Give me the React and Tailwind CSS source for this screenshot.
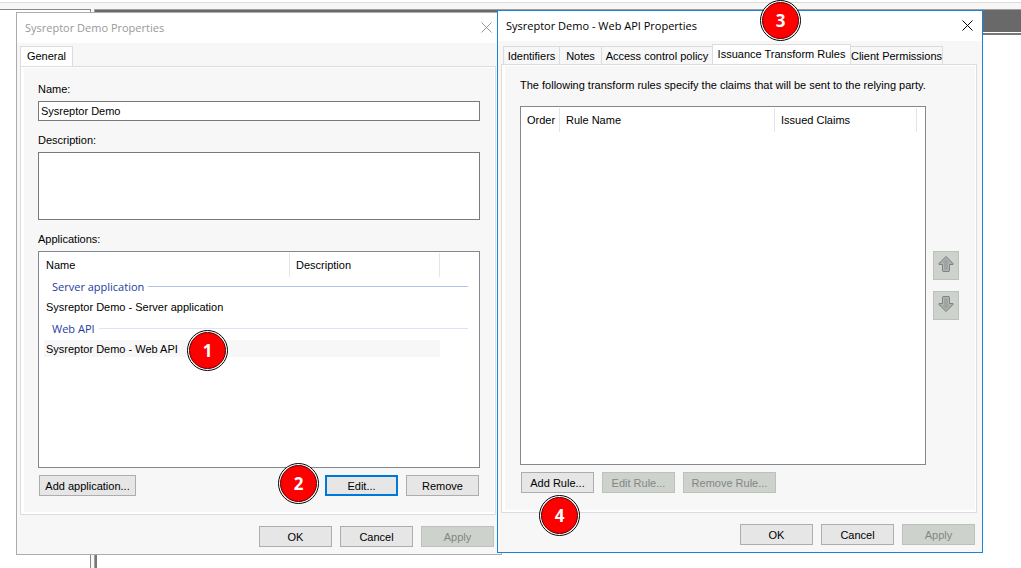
import React from "react";

function CloseIcon() {
  return (
    <svg width="11" height="11" viewBox="0 0 11 11" fill="none" stroke="currentColor" strokeWidth="1" aria-hidden="true">
      <path d="M0.5 0.5 10.5 10.5M10.5 0.5 0.5 10.5" />
    </svg>
  );
}

function ArrowIcon({ down }) {
  return (
    <svg width="16" height="16" viewBox="0 0 16 16" className={`-mt-1 ${down ? "rotate-180" : ""}`} aria-hidden="true">
      <path d="M8 0.5 15 7.5V8.5H11.5V15L11 15.5H5L4.5 15V8.5H1V7.5Z" fill="#a0a3a1" stroke="#7f8280" strokeWidth="1" strokeLinejoin="round" />
      <path d="M8 2 13 7.2H10.5V14.5H5.5V7.2H3Z" fill="none" stroke="#b9bdba" strokeWidth="0.8" />
    </svg>
  );
}

function Button({ children, className = "w-[73px]", primary, disabled }) {
  const look = disabled
    ? "border border-[#bcc1bc] bg-[#cdd2cd] text-[#858585]"
    : primary
      ? "border-2 border-[#0078d7] bg-[#e6e6e6]"
      : "border border-[#adadad] bg-[#e6e6e6]";
  return (
    <button type="button" disabled={disabled} className={`flex h-[21px] items-center justify-center whitespace-nowrap ${look} ${className}`}>
      {children}
    </button>
  );
}

function Tab({ children, active, className }) {
  return (
    <button
      type="button"
      role="tab"
      aria-selected={!!active}
      className={`flex items-center justify-center whitespace-nowrap border-[#dcdcdc] ${
        active ? "-mb-px h-[21px] border-x border-t bg-white pb-0.5" : "h-[18px] border-t border-r bg-[#f7f7f7]"
      } ${className}`}
    >
      {children}
    </button>
  );
}

function Dialog({ title, active, place, tabs, children }) {
  return (
    <section
      aria-label={title}
      className={`absolute flex w-[486px] flex-col border bg-[#f7f7f7] ${active ? "border-[#1883d7]" : "border-[#acacac]"} ${place}`}
    >
      <header className={`flex h-[30px] items-center justify-between bg-white pr-[9px] pl-2 font-['Open_Sans',sans-serif] text-[11px] ${active ? "text-black" : "text-[#999999]"}`}>
        <h2>{title}</h2>
        <button type="button" aria-label="Close" className="mb-0.5 flex size-[11px] items-center justify-center">
          <CloseIcon />
        </button>
      </header>
      <div className="flex flex-col pt-[3px] pr-[5px] pl-[3px]">
        <div role="tablist" className="flex h-5 items-end">{tabs}</div>
        <div className="border border-[#dcdcdc] bg-white pt-px pr-px pb-0.5 pl-[3px]">
          <div className="h-[444px] bg-[#f7f7f7]">{children}</div>
        </div>
      </div>
      <footer className="flex justify-end gap-2 pt-[11px] pr-[7px] pb-[7px]">
        <Button>OK</Button>
        <Button>Cancel</Button>
        <Button disabled>Apply</Button>
      </footer>
    </section>
  );
}

function GroupRow({ name, line }) {
  return (
    <tr className="h-[21px]">
      <th colSpan={3} scope="rowgroup" className="p-0 align-top font-normal">
        <div className="flex h-[19px] items-center gap-1 pr-[11px] pl-[13px] font-['Open_Sans',sans-serif] text-[11px] text-[#1e3c9e]">
          <span>{name}</span>
          <span className={`h-px flex-1 ${line}`} />
        </div>
      </th>
    </tr>
  );
}

function ItemRow({ name, selected }) {
  const fill = selected ? "bg-[#f7f7f7]" : "";
  return (
    <tr className="h-[21px]">
      <td className="p-0 pl-[5px] align-top">
        <div className={`flex h-[17px] items-center pl-0.5 ${fill}`}>{name}</div>
      </td>
      <td className="p-0 align-top">
        <div className={`h-[17px] ${fill}`} />
      </td>
      <td className="p-0" />
    </tr>
  );
}

function Badge({ n, place }) {
  return (
    <div className={`absolute flex size-[41px] items-center justify-center rounded-full border border-black bg-white p-px ${place}`}>
      <span className="flex size-full items-center justify-center rounded-full border border-[#5a0000] bg-[#fe0000] font-['Open_Sans',sans-serif] text-[17px] font-bold text-white">
        {n}
      </span>
    </div>
  );
}

const headCell = "h-6 border-r border-[#e5e5e5] p-0 pl-1.5 font-normal";

export default function App() {
  return (
    <main className="relative flex h-screen flex-col overflow-hidden bg-white font-['Liberation_Sans',Arial,sans-serif] text-[11px] leading-4 text-black">
      <div className="mt-0.5 h-[7px] border-t border-[#dcdcdc] bg-[#f7f7f7]" />
      <div className="flex flex-1 gap-[3px] bg-[#f7f7f7]">
        <div className="w-[91px] border-t border-r border-[#828790] bg-white" />
        <div className="flex flex-1 flex-col border-t border-l border-[#a0a0a0] bg-white">
          <div className="h-[22px] border-l-2 border-[#696969] bg-[#696969]" />
          <div className="mt-px flex-1 border-t-2 border-l-2 border-[#777777]" />
        </div>
      </div>

      <Dialog title="Sysreptor Demo Properties" place="top-3 left-4" tabs={<Tab active className="w-[53px]">General</Tab>}>
        <div className="flex flex-col px-3.5 pt-[13px]">
          <label htmlFor="name" className="mb-1">Name:</label>
          <input id="name" defaultValue="Sysreptor Demo" className="h-5 border border-[#7a7a7a] bg-white px-0.5 outline-none" />
          <label htmlFor="description" className="mt-[11px] mb-1">Description:</label>
          <textarea id="description" className="h-[68px] resize-none border border-[#7a7a7a] bg-white outline-none" />
          <div className="mt-[11px] mb-1">Applications:</div>
          <div className="h-[217px] border border-[#828790] bg-white pt-px">
            <table aria-label="Applications" className="w-full table-fixed border-separate border-spacing-0 text-left">
              <colgroup>
                <col className="w-[251px]" />
                <col className="w-[150px]" />
                <col />
              </colgroup>
              <thead>
                <tr>
                  <th className="h-6 border-r border-[#e5e5e5] p-0 pl-[7px] font-normal">Name</th>
                  <th className={headCell}>Description</th>
                  <th className="p-0" />
                </tr>
              </thead>
              <tbody>
                <GroupRow name="Server application" line="bg-[#b4c3e6]" />
                <ItemRow name="Sysreptor Demo - Server application" />
                <GroupRow name="Web API" line="bg-[#dce4f3]" />
                <ItemRow name="Sysreptor Demo - Web API" selected />
              </tbody>
            </table>
          </div>
          <div className="mt-[7px] flex gap-2 px-px">
            <Button className="mr-auto w-[97px]">Add application...</Button>
            <Button primary>Edit...</Button>
            <Button>Remove</Button>
          </div>
        </div>
      </Dialog>

      <Dialog
        title="Sysreptor Demo - Web API Properties"
        active
        place="top-2.5 left-[497px]"
        tabs={
          <>
            <Tab className="ml-0.5 w-[57px] border-l">Identifiers</Tab>
            <Tab className="w-[42px]">Notes</Tab>
            <Tab className="w-[110px] border-r-0">Access control policy</Tab>
            <Tab active className="w-[139px]">Issuance Transform Rules</Tab>
            <Tab className="w-[92px]">Client Permissions</Tab>
          </>
        }
      >
        <div className="flex flex-col pt-[11px] pl-[15px]">
          <p className="mb-[13px]">The following transform rules specify the claims that will be sent to the relying party.</p>
          <div className="flex gap-[7px]">
            <div className="h-[359px] w-[406px] border border-[#828790] bg-white pt-px">
              <table aria-label="Issuance transform rules" className="w-full table-fixed border-separate border-spacing-0 text-left">
                <colgroup>
                  <col className="w-[39px]" />
                  <col className="w-[215px]" />
                  <col className="w-[142px]" />
                  <col />
                </colgroup>
                <thead>
                  <tr>
                    <th className={headCell}>Order</th>
                    <th className={headCell}>Rule Name</th>
                    <th className={headCell}>Issued Claims</th>
                    <th className="p-0" />
                  </tr>
                </thead>
              </table>
            </div>
            <div className="flex flex-col justify-center gap-[11px]">
              <button type="button" disabled aria-label="Move up" className="flex h-[29px] w-[26px] items-center justify-center border border-[#bcc1bc] bg-[#cdd2cd]">
                <ArrowIcon />
              </button>
              <button type="button" disabled aria-label="Move down" className="flex h-[29px] w-[26px] items-center justify-center border border-[#bcc1bc] bg-[#cdd2cd]">
                <ArrowIcon down />
              </button>
            </div>
          </div>
          <div className="mt-[7px] flex gap-2 pl-px">
            <Button>Add Rule...</Button>
            <Button disabled>Edit Rule...</Button>
            <Button disabled className="w-[93px]">Remove Rule...</Button>
          </div>
        </div>
      </Dialog>

      <Badge n={1} place="top-[330px] left-[187px]" />
      <Badge n={2} place="top-[463px] left-[278px]" />
      <Badge n={3} place="top-0 left-[760px]" />
      <Badge n={4} place="top-[495px] left-[539px]" />
    </main>
  );
}
